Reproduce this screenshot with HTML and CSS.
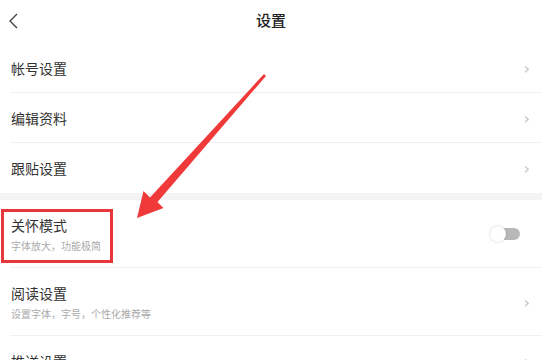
FILE: index.html
```html
<!DOCTYPE html>
<html lang="zh-CN">
<head>
  <meta charset="UTF-8" />
  <title>设置</title>
  <link rel="stylesheet" href="styles.css">
</head>
<body>
  <div class="page">
    <div class="header">
      <svg class="back" width="12" height="18" viewBox="0 0 12 18"><path d="M9 2 L2 9 L9 16" fill="none" stroke="#444" stroke-width="1.4"/></svg>
      <div class="title">设置</div>
    </div>

    <div class="group">
      <div class="row"><span class="label">帐号设置</span><span class="arrow">›</span></div>
      <div class="row"><span class="label">编辑资料</span><span class="arrow">›</span></div>
      <div class="row last"><span class="label">跟贴设置</span><span class="arrow">›</span></div>
    </div>

    <div class="gap"></div>

    <div class="group">
      <div class="row tall">
        <div class="text">
          <span class="label">关怀模式</span>
          <span class="sub">字体放大，功能极简</span>
        </div>
        <div class="toggle"><div class="knob"></div></div>
      </div>
      <div class="row tall">
        <div class="text">
          <span class="label">阅读设置</span>
          <span class="sub">设置字体，字号，个性化推荐等</span>
        </div>
        <span class="arrow">›</span>
      </div>
      <div class="row"><span class="label">推送设置</span><span class="arrow">›</span></div>
    </div>

    <!-- annotation -->
    <div class="mark"></div>
    <svg class="pointer" width="542" height="360" viewBox="0 0 542 360">
      <polygon points="264,74 150,197.5 143.5,191 137,218 163.5,208 157.5,202 266,76" fill="#f03a3a"/>
    </svg>
  </div>
</body>
</html>
```

FILE: styles.css
```css
body {
  margin: 0;
  background: #fff;
  font-family: "Noto Sans CJK SC", "Noto Sans", sans-serif;
  color: #333;
}
.page {
  position: relative;
  width: 542px;
  height: 360px;
  overflow: hidden;
}
.header {
  height: 43px;
  display: flex;
  align-items: center;
  justify-content: center;
  position: relative;
}
.header .back {
  position: absolute;
  left: 8px;
  top: 12px;
}
.title {
  font-size: 15px;
  font-weight: 500;
  color: #222;
  margin-top: -4px;
}
.row {
  height: 50px;
  display: flex;
  align-items: center;
  justify-content: space-between;
  padding: 0 12px 0 11px;
  position: relative;
}
.row::after {
  content: "";
  position: absolute;
  left: 10px;
  right: 0;
  bottom: 0;
  height: 1px;
  background: #f0f0f0;
}
.row.last::after {
  display: none;
}
.row.tall {
  height: 68px;
}
.label {
  font-size: 14px;
  color: #333;
}
.text {
  display: flex;
  flex-direction: column;
  gap: 3px;
}
.sub {
  font-size: 10px;
  color: #aaa;
}
.arrow {
  font-size: 16px;
  color: #c4c4c4;
  font-family: "DejaVu Sans", sans-serif;
}
.gap {
  height: 7px;
  background: #f4f4f4;
}
.toggle {
  width: 28px;
  height: 12px;
  border-radius: 6px;
  background: #b8b8b8;
  position: relative;
  margin-right: 10px;
}
.knob {
  position: absolute;
  left: -2px;
  top: -2px;
  width: 16px;
  height: 16px;
  border-radius: 50%;
  background: #fff;
  box-shadow: 0 0 2px rgba(0, 0, 0, 0.25);
}
.mark {
  position: absolute;
  left: 1px;
  top: 209px;
  width: 106px;
  height: 48px;
  border: 3px solid #e8363a;
}
.pointer {
  position: absolute;
  left: 0;
  top: 0;
}
```
